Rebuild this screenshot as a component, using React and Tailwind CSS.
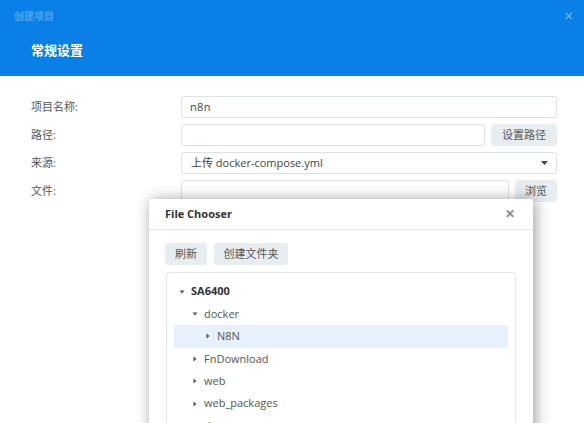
import React from "react";

const font = { fontFamily: '"Open Sans", "Noto Sans CJK SC", sans-serif' };

function TriDown() {
  return (
    <svg width="6" height="6" viewBox="0 0 6 6" className="shrink-0">
      <polygon points="0.5,1.5 5.5,1.5 3,4.5" fill="#555" />
    </svg>
  );
}
function TriRight() {
  return (
    <svg width="6" height="6" viewBox="0 0 6 6" className="shrink-0">
      <polygon points="1.5,0.5 4.5,3 1.5,5.5" fill="#555" />
    </svg>
  );
}

function TreeRow({ level, open, label, bold, active }) {
  return (
    <div
      className={`h-[22.4px] flex items-center rounded-[3px] ${active ? "bg-[#e6f1fd]" : ""}`}
      style={{ paddingLeft: 5 + level * 13 }}
    >
      {open ? <TriDown /> : <TriRight />}
      <span className={`ml-[6px] text-[11px] ${bold ? "font-bold text-[#333]" : "text-[#555]"}`}>{label}</span>
    </div>
  );
}

export default function App() {
  return (
    <div className="relative w-[584px] h-[423px] overflow-hidden bg-white" style={font}>
      <div className="h-[76px] bg-[#0880e8]">
        <div className="h-[32px] flex items-center justify-between px-[14px]">
          <span className="text-[10px] font-semibold text-[#4fa3ef]">创建项目</span>
          <span className="text-[11px] text-[#7fbdf3] mr-[-3px]">✕</span>
        </div>
        <div className="h-[38px] flex items-center pl-[31px]">
          <span className="text-[13px] font-bold text-white">常规设置</span>
        </div>
      </div>

      <div className="pt-[20px] pl-[31px] pr-[27px] flex flex-col gap-[6px]">
        <div className="flex items-center h-[22px]">
          <div className="w-[150px] text-[11px] text-[#555]">项目名称:</div>
          <div className="flex-1 h-[22px] border border-[#dde2e6] rounded-[3px] flex items-center px-[8px] text-[11px] text-[#444] tracking-[0.3px]">n8n</div>
        </div>
        <div className="flex items-center h-[22px]">
          <div className="w-[150px] text-[11px] text-[#555]">路径:</div>
          <div className="flex-1 h-[22px] border border-[#dde2e6] rounded-[3px]"></div>
          <div className="ml-[6px] w-[66px] h-[22px] rounded-[3px] bg-[#e8edf2] flex items-center justify-center text-[11px] text-[#555]">设置路径</div>
        </div>
        <div className="flex items-center h-[22px]">
          <div className="w-[150px] text-[11px] text-[#555]">来源:</div>
          <div className="flex-1 h-[22px] border border-[#dde2e6] rounded-[3px] flex items-center justify-between pl-[9px] pr-[8px] text-[11px] text-[#444]">
            <span>上传 docker-compose.yml</span>
            <svg width="7" height="4" viewBox="0 0 7 4"><polygon points="0,0 7,0 3.5,4" fill="#444" /></svg>
          </div>
        </div>
        <div className="flex items-center h-[22px]">
          <div className="w-[150px] text-[11px] text-[#555]">文件:</div>
          <div className="flex-1 h-[22px] border border-[#dde2e6] rounded-[3px]"></div>
          <div className="ml-[6px] w-[42px] h-[22px] rounded-[3px] bg-[#e8edf2] flex items-center justify-center text-[11px] text-[#555]">浏览</div>
        </div>
      </div>

      <div className="absolute left-[149px] top-[199px] w-[384px] h-[260px] bg-white shadow-[2px_1px_14px_rgba(0,0,0,0.4)]">
        <div className="h-[31px] border-b border-[#e4e6e8] flex items-center justify-between pl-[16px] pr-[18px]">
          <span className="text-[11px] font-bold text-[#333]">File Chooser</span>
          <span className="text-[12px] font-bold text-[#888]">✕</span>
        </div>
        <div className="px-[16px] pt-[13px]">
          <div className="flex gap-[7px]">
            <div className="w-[42px] h-[22px] rounded-[3px] bg-[#e8edf2] flex items-center justify-center text-[11px] text-[#555]">刷新</div>
            <div className="w-[74px] h-[22px] rounded-[3px] bg-[#e8edf2] flex items-center justify-center text-[11px] text-[#555]">创建文件夹</div>
          </div>
          <div className="mt-[7px] mx-[1px] h-[200px] border border-[#e4e7ea] rounded-[3px] pt-[7.5px] px-[7px]">
            <TreeRow level={0} open label="SA6400" bold />
            <TreeRow level={1} open label="docker" />
            <TreeRow level={2} label="N8N" active />
            <TreeRow level={1} label="FnDownload" />
            <TreeRow level={1} label="web" />
            <TreeRow level={1} label="web_packages" />
            <TreeRow level={1} label="docs" />
          </div>
        </div>
      </div>
    </div>
  );
}
